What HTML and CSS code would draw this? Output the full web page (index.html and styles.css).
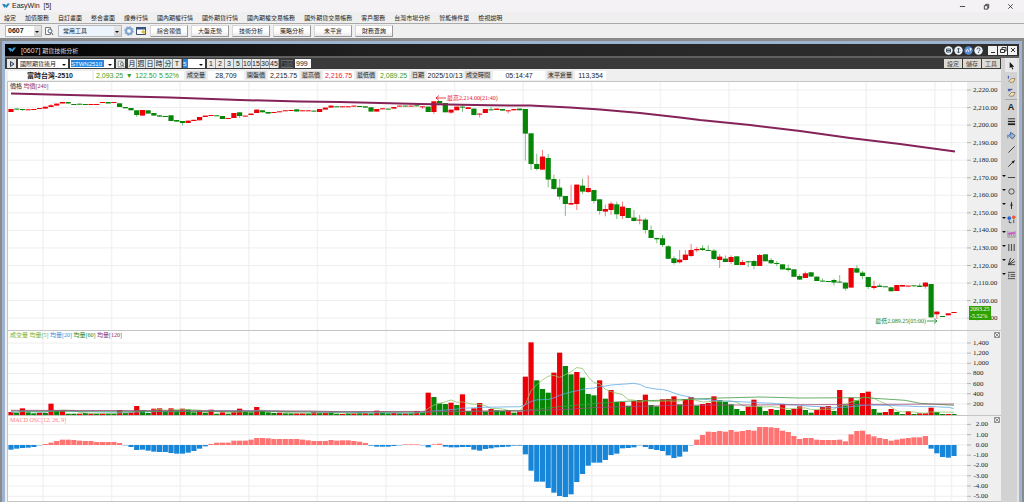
FILE: index.html
```html
<!DOCTYPE html>
<html lang="zh-Hant">
<head>
    <meta charset="UTF-8">
    <meta name="viewport" content="width=device-width, initial-scale=1.0">
    <title>EasyWin [5]</title>
    <link rel="stylesheet" href="styles.css">
</head>
<body>
    <header class="title-bar">
        <svg class="logo" viewBox="0 0 8 6"><path d="M0 1h3l1 1.500L5.500 .5H8L4.500 5 3.500 3.500 2.500 5z" fill="#2787b8"/></svg>
        <span class="app-name">EasyWin&nbsp; [5]</span>
        <div class="win-btns">
            <button aria-label="minimize"><svg viewBox="0 0 8 8"><path d="M1 4h6" stroke="#333" fill="none"/></svg></button>
            <button aria-label="restore"><svg viewBox="0 0 8 8"><path d="M1.500 3h4v4h-4zM3 2.500V1.500h3.500v4h-1" stroke="#333" fill="none"/></svg></button>
            <button aria-label="close"><svg viewBox="0 0 8 8"><path d="M1.500 1.500l5 5m0-5l-5 5" stroke="#333" fill="none"/></svg></button>
        </div>
    </header>

    <nav class="menu">
        <a href="#">設定</a>
        <a href="#">加值服務</a>
        <a href="#">自訂畫面</a>
        <a href="#">整合畫面</a>
        <a href="#">證券行情</a>
        <a href="#">國內期權行情</a>
        <a href="#">國外期貨行情</a>
        <a href="#">國內期權交易帳務</a>
        <a href="#">國外期貨交易帳務</a>
        <a href="#">客戶服務</a>
        <a href="#">台灣市場分析</a>
        <a href="#">智能條件單</a>
        <a href="#">檢視說明</a>
    </nav>

    <div class="toolbar">
        <span class="drop drop-code"><select aria-label="畫面代碼"><option>0607</option></select></span>
        <button class="icon-btn" aria-label="查詢"><svg viewBox="0 0 10 10"><path d="M1.500 1.500h5v7h-5z" fill="#fff" stroke="#777"/><circle cx="6" cy="5" r="2" fill="#dff" stroke="#667"/><path d="M7.500 6.500L9 9" stroke="#555"/></svg></button>
        <span class="drop drop-tools"><select aria-label="工具列"><option>常用工具</option></select></span>
        <button class="icon-btn" aria-label="齒輪"><svg viewBox="0 0 10 10"><circle cx="5" cy="5" r="3" fill="#dcebfa" stroke="#7fa5cc" stroke-width="2"/><circle cx="5" cy="5" r="4.500" fill="none" stroke="#7fa5cc" stroke-dasharray="1.500 2"/><circle cx="5" cy="5" r="1" fill="#fff"/></svg></button>
        <button class="icon-btn" aria-label="視窗"><svg viewBox="0 0 10 10"><path d="M.5 1.500h9v7h-9z" fill="#fff" stroke="#3b4c66"/><path d="M0 1h10v2.500H0z" fill="#35527d"/><path d="M5 6l2-2 3 2-2 2z" fill="#e3bd3c"/></svg></button>
        <div class="quick-btns">
            <button>綜合報價</button>
            <button>大盤走勢</button>
            <button>技術分析</button>
            <button>策略分析</button>
            <button>未平倉</button>
            <button>財務查詢</button>
        </div>
    </div>

    <main class="workspace">
        <section class="window">
            <div class="window-title">
                <svg class="logo" viewBox="0 0 8 6"><path d="M0 1h3l1 1.500L5.500 .5H8L4.500 5 3.500 3.500 2.500 5z" fill="#3c9ccb"/></svg>
                <h1><span class="code">[0607]</span> 期貨技術分析</h1>
                <div class="round-btns">
                    <button aria-label="連線"><svg viewBox="0 0 9 9"><circle cx="4.500" cy="4.500" r="4.200" fill="#eef3f8"/><path d="M2.500 3h4v3h-4zM2 4.500h4" fill="none" stroke="#456"/></svg></button>
                    <button aria-label="資訊"><svg viewBox="0 0 9 9"><circle cx="4.500" cy="4.500" r="4.200" fill="#eef3f8"/><path d="M4.500 2v5M3 3.500L4.500 2 6 3.500M3 5.500L4.500 7 6 5.500" fill="none" stroke="#456"/></svg></button>
                    <button aria-label="放大"><svg viewBox="0 0 9 9"><circle cx="4.500" cy="4.500" r="4.200" fill="#5b8fd6"/><path d="M2 6l1.500-3L5 6M5.500 3H8M6.500 2v3" fill="none" stroke="#dceaff"/></svg></button>
                    <button aria-label="說明"><svg viewBox="0 0 9 9"><circle cx="4.500" cy="4.500" r="4.200" fill="#eef3f8"/><path d="M3 3.500Q3 2 4.500 2T6 3.500 4.500 5.200M4.500 6v1" fill="none" stroke="#456"/></svg></button>
                </div>
                <div class="square-btns">
                    <button aria-label="縮小"><svg viewBox="0 0 8 8"><path d="M2 6.500h4" stroke="#333"/></svg></button>
                    <button aria-label="還原"><svg viewBox="0 0 8 8"><path d="M1.500 3.500h4v3h-4zM3 3V1.500h4V5H6" fill="none" stroke="#333"/></svg></button>
                    <button aria-label="關閉"><svg viewBox="0 0 8 8"><path d="M2 2l4 4m0-4L2 6" stroke="#333"/></svg></button>
                </div>
            </div>

            <div class="window-body">
                <div class="chart-side">
                    <div class="chart-bar">
                        <button class="play" aria-label="展開"><svg viewBox="0 0 8 8"><path d="M2.500 1.500L6 4 2.500 6.500z" fill="#9cc8ef" stroke="#345"/></svg></button>
                        <span class="drop drop-kind"><select aria-label="商品類別"><option>國際期貨連月</option></select></span>
                        <span class="drop drop-symbol"><input type="text" value="STWN2510" aria-label="商品代碼"></span>
                        <button class="find" aria-label="搜尋"><svg viewBox="0 0 10 10"><path d="M1.500 1.500h5v7h-5z" fill="#fff" stroke="#888"/><circle cx="6" cy="5" r="2" fill="#cfe6e0" stroke="#566"/><path d="M7.500 6.500L9 9" stroke="#555"/></svg></button>
                        <div class="periods">
                            <button>月</button><button>週</button><button>日</button><button>時</button><button class="on">分</button><button>T</button>
                        </div>
                        <span class="drop drop-min"><input type="text" value="5" aria-label="分鐘"></span>
                        <div class="periods">
                            <button>1</button><button>2</button><button>3</button><button class="on">5</button><button>10</button><button>15</button><button>30</button><button>45</button>
                        </div>
                        <label class="span-label" for="span">期間</label>
                        <input class="span-input" id="span" type="text" value="999">
                        <div class="bar-actions">
                            <button>設定</button>
                            <button>儲存</button>
                            <button>工具</button>
                        </div>
                    </div>

                    <div class="quote">
                        <span class="val name">富時台灣-2510</span>
                        <span class="val down change"><span>2,093.25</span><span>▼</span><span>122.50</span><span>5.52%</span></span>
                        <span class="key">成交量</span><span class="val">28,709</span>
                        <span class="key">開盤價</span><span class="val tight">2,215.75</span>
                        <span class="key">最高價</span><span class="val tight up">2,216.75</span>
                        <span class="key">最低價</span><span class="val tight down">2,089.25</span>
                        <span class="key">日期</span><span class="val">2025/10/13</span>
                        <span class="key">成交時間</span><span class="val time">05:14:47</span>
                        <span class="key">未平倉量</span><span class="val tight">113,354</span>
                    </div>

                    <div class="pane">
                        <svg class="plot price-h" id="pricePlot" viewBox="8 82 959 248" preserveAspectRatio="none"></svg>
                        <svg class="axis price-h" id="priceAxis"></svg>
                        <p class="legend"><span>價格</span> <span class="purple">均價[240]</span></p>
                        <span class="mark high"><svg class="arrow" viewBox="0 0 11 6"><path d="M11 3H1M4 .5L1 3l3 2.500" fill="none" stroke="#e8101c" stroke-width=".8"/></svg>最高2,214.00(21:40)</span>
                        <span class="mark low">最低2,089.25(05:00)<svg class="arrow" viewBox="0 0 11 6"><path d="M0 3h10M7 .5L10 3 7 5.500" fill="none" stroke="#16861f" stroke-width=".8"/></svg></span>
                        <span class="last-price">2093.25<br>-5.52%</span>
                    </div>
                    <div class="pane">
                        <svg class="plot volume-h" id="volumePlot" viewBox="8 331 959 84" preserveAspectRatio="none"></svg>
                        <svg class="axis volume-h" id="volumeAxis"></svg>
                        <p class="legend"><span class="lime">成交量</span> <span class="lime">均量[5]</span> <span class="blue">均量[20]</span> <span class="green">均量[60]</span> <span class="purple">均量[120]</span></p>
                        <button class="pane-close" aria-label="關閉成交量"><svg viewBox="0 0 6 6"><path d="M.5.5h5v5h-5zM1 1l4 4m0-4L1 5" fill="none" stroke="#777" stroke-width=".8"/></svg></button>
                    </div>
                    <div class="pane last">
                        <svg class="plot macd-h" id="macdPlot" viewBox="8 416 959 85" preserveAspectRatio="none"></svg>
                        <svg class="axis macd-h" id="macdAxis"></svg>
                        <p class="legend"><span class="pink">MACD OSC[12, 26, 9]</span></p>
                        <button class="pane-close" aria-label="關閉MACD"><svg viewBox="0 0 6 6"><path d="M.5.5h5v5h-5zM1 1l4 4m0-4L1 5" fill="none" stroke="#777" stroke-width=".8"/></svg></button>
                    </div>
                </div>

                <aside class="draw-tools">
                    <button class="picked" aria-label="選取"><svg viewBox="0 0 10 10"><path d="M3 1v7l1.700-1.500L6 9.500l1-.5-1.200-2.700H8z" fill="#111"/></svg></button>
                    <button aria-label="清除一個"><svg viewBox="0 0 10 10"><path d="M1.500 1v3" stroke="#2a3ba0"/><path d="M2 7l3-3h4L7 8H3z" fill="#f3e0b8" stroke="#75603c" stroke-width=".7"/></svg></button>
                    <button class="divide" aria-label="清除全部"><svg viewBox="0 0 10 10"><path d="M1 1.500h5M1 3h3" stroke="#2a3ba0"/><path d="M2 8l3-3h4L7 9H3z" fill="#f3e0b8" stroke="#75603c" stroke-width=".7"/></svg></button>
                    <button class="letter" aria-label="文字">A</button>
                    <button aria-label="線寬"><svg viewBox="0 0 10 10"><path d="M1 2h8" stroke="#222"/><path d="M1 5h8" stroke="#222" stroke-width="1.500"/><path d="M1 8h8" stroke="#222" stroke-width="2"/></svg></button>
                    <button aria-label="填色"><svg viewBox="0 0 10 10"><path d="M2 5l3-3 4 3-3 4z" fill="#9fb4cf" stroke="#4a5d77"/><path d="M1 4v4M4 1v4" stroke="#346bc0"/></svg></button>
                    <button aria-label="直線"><svg viewBox="0 0 10 10"><path d="M1.500 8.500l7-7" stroke="#333"/></svg></button>
                    <button aria-label="箭頭"><svg viewBox="0 0 10 10"><path d="M1.500 8.500L7 3" stroke="#222"/><path d="M9 1L5 3l2 2z" fill="#111"/></svg></button>
                    <button class="more" aria-label="水平線"><svg viewBox="0 0 10 10"><path d="M1 5h8" stroke="#333"/></svg></button>
                    <button class="more" aria-label="圓形"><svg viewBox="0 0 10 10"><circle cx="5" cy="5" r="3" fill="none" stroke="#444"/></svg></button>
                    <button class="more" aria-label="標記"><svg viewBox="0 0 10 10"><path d="M5 1v8" stroke="#222"/><path d="M3.500 4h3L5 7z" fill="#222"/></svg></button>
                    <button class="more" aria-label="漲跌"><svg viewBox="0 0 10 10"><circle cx="2.500" cy="3.500" r="2" fill="#2265d8"/><circle cx="7.500" cy="2.500" r="2" fill="#ee5a2e"/><path d="M2.500 6v2.500H5M7.500 5v4" fill="none" stroke="#345"/></svg></button>
                    <button class="more" aria-label="趨勢"><svg viewBox="0 0 10 10"><path d="M1 2v7h8V2M3 3v5M5 3v5M7 3v5" fill="none" stroke="#777" stroke-width=".7"/><path d="M1 5l2 1 2-2 2 1 2-1" fill="none" stroke="#d13ed1" stroke-width="1.300"/></svg></button>
                    <button class="more" aria-label="週期線"><svg viewBox="0 0 10 10"><path d="M2 1v8M5 1v8M8 1v8" stroke="#555" stroke-width="1.300"/></svg></button>
                    <button class="more" aria-label="扇形線"><svg viewBox="0 0 10 10"><path d="M1.500 8.500L4 1M1.500 8.500L8 2M1.500 8.500L9 5M1.500 8.500H9" stroke="#333"/></svg></button>
                    <button class="more" aria-label="黃金分割"><svg viewBox="0 0 10 10"><path d="M1 1.500h8M1 8.500h8M4 4h5M4 6h5M2 3v4" stroke="#444"/></svg></button>
                </aside>
            </div>
        </section>
    </main>

    <script src="chart.js"></script>
</body>
</html>
```

FILE: styles.css
```css
* {
    box-sizing: border-box;
}

body {
    margin: 0;
    min-height: 100vh;
    overflow: hidden;
    background-color: #efefef;
    color: #222;
    font-family: "Liberation Sans", "Noto Sans CJK TC", sans-serif;
    font-size: 6px;
    line-height: 8px;
}

button, input, select {
    margin: 0;
    padding: 0;
    border: none;
    border-radius: 0;
    background: none;
    color: inherit;
    font: inherit;
}

button {
    display: flex;
    align-items: center;
    justify-content: center;
}

a {
    color: inherit;
    text-decoration: none;
    white-space: nowrap;
}

.logo {
    width: 8px;
    height: 6px;
}

/* application frame */
.title-bar {
    display: flex;
    align-items: center;
    gap: 2px;
    height: 12px;
    padding-left: 2px;
    background-color: #f4f2f5;
}

.app-name {
    font-size: 7px;
}

.win-btns {
    display: flex;
    gap: 17px;
    margin-left: auto;
    padding-right: 10px;
}

.win-btns svg {
    width: 7px;
    height: 7px;
}

.menu {
    display: flex;
    align-items: center;
    gap: 9px;
    height: 11px;
    padding-left: 4px;
}

.toolbar {
    display: flex;
    align-items: center;
    height: 16px;
    padding-left: 5px;
    border-top: 1px solid #aaa;
    border-bottom: 1px solid #888;
}

.drop {
    position: relative;
    display: flex;
    border: 1px solid #b5b9bf;
    background-color: #fff;
}

.drop select, .drop input {
    flex: 1;
    min-width: 0;
    appearance: none;
    padding-left: 2px;
}

.drop::after {
    content: "";
    position: absolute;
    top: 50%;
    right: 2px;
    border: 2px solid transparent;
    border-top-color: #111;
    pointer-events: none;
}

.drop-code {
    width: 37px;
    height: 12px;
    font-size: 7px;
    font-weight: bold;
}

.drop-tools {
    width: 64px;
    height: 12px;
    margin-left: 4px;
    background-color: #edf4fc;
}

.drop-tools select {
    padding-left: 4px;
}

.drop-code select, .drop-tools select {
    background: linear-gradient(#e9e9e9, #d2d2d2) right / 7px 100% no-repeat;
}

.icon-btn svg {
    width: 10px;
    height: 10px;
}

.icon-btn {
    margin-left: 2px;
}

.quick-btns {
    display: flex;
    gap: 3px;
    margin-left: 4px;
}

.quick-btns button {
    width: 38px;
    height: 12px;
    background: linear-gradient(#fff 50%, #e8e8ec);
    border: 1px solid #d8d8d8;
    border-right-color: #999;
    border-bottom-color: #999;
}

.workspace {
    padding: 2px 2px 0;
    background-color: #8b8b8b;
}

.window {
    border: 3px solid #9db5d3;
    border-bottom: none;
    background-color: #efefef;
}

.window-title {
    display: flex;
    align-items: center;
    height: 12px;
    padding: 0 2px 0 3px;
    background: linear-gradient(90deg, #000, #202020 35%, #303030);
    color: #ddd;
}

.window-title h1 {
    margin: 2px 0 0 5px;
    font-size: 6px;
    font-weight: normal;
}

.window-title .code {
    font-size: 7px;
}

.round-btns, .square-btns {
    display: flex;
    gap: 1px;
}

.round-btns {
    margin-left: auto;
}

.square-btns {
    margin-left: 5px;
}

.round-btns svg {
    width: 9px;
    height: 9px;
}

.square-btns button {
    width: 9px;
    height: 9px;
    background-color: #f2f2f2;
}

.square-btns svg {
    width: 8px;
    height: 8px;
}

.window-body {
    display: flex;
    border-top: 2px solid #606060;
}

.chart-side {
    flex: 1;
    min-width: 0;
}

/* dark control row */
.chart-bar {
    display: flex;
    align-items: center;
    height: 11px;
    padding: 0 1px 0 2px;
    background-color: #3a3a3a;
}

.play, .find {
    width: 9px;
    height: 9px;
    background-color: #e6e6e6;
}

.play svg, .find svg {
    width: 8px;
    height: 8px;
}

.chart-bar .drop {
    height: 9px;
    border: none;
}

.drop-kind {
    width: 50px;
    margin-left: 2px;
}

.drop-symbol {
    width: 44px;
    margin: 0 2px;
}

.drop-symbol input {
    flex: none;
    width: 33px;
    margin: 1px;
    padding: 0;
    background-color: #2685df;
    color: #fff;
}

.find {
    margin-right: 3px;
}

.periods {
    display: flex;
}

.periods button {
    width: 9px;
    height: 9px;
    border-right: 1px solid #999;
    background-color: #e9e9e9;
    font-size: 7px;
}

.periods .on {
    background-color: #d0ecf2;
}

.drop-min {
    width: 22px;
    margin: 0 2px 0 1px;
}

.drop-min input {
    flex: none;
    width: 5px;
    padding: 0;
    background-color: #2685df;
    color: #fff;
}

.span-label {
    margin: 0 2px;
    background-color: #6a6a6a;
    color: #111;
}

.span-input {
    width: 16px;
    height: 9px;
    padding-left: 1px;
    background-color: #fff;
    font-size: 7px;
}

.bar-actions {
    display: flex;
    gap: 1px;
    margin-left: auto;
}

.bar-actions button {
    width: 18px;
    height: 9px;
    background-color: #dedbd5;
    color: #4c4033;
}

/* quote row */
.quote {
    display: flex;
    align-items: center;
    gap: 2px;
    height: 12px;
    padding-left: 3px;
    font-size: 7px;
    white-space: nowrap;
}

.quote .key {
    padding: 0 1px;
    background-color: #d9d9d9;
    font-size: 6px;
}

.quote .val {
    min-width: 36px;
    height: 9px;
    background-color: #fff;
    line-height: 9px;
    text-align: center;
}

.quote .tight {
    min-width: 31px;
}

.quote .name {
    min-width: 84px;
    font-weight: bold;
}

.quote .change {
    display: flex;
    justify-content: space-between;
    width: 90px;
    padding: 0 5px 0 2px;
}

.quote .time {
    min-width: 52px;
}

.up {
    color: #f02030;
}

.down {
    color: #3ba020;
}

/* chart panes */
.pane {
    position: relative;
    display: flex;
    margin-left: 2px;
    border-top: 1px solid #c4c4c4;
    border-left: 1px solid #c4c4c4;
    font-family: "Liberation Serif", "Noto Sans CJK TC", serif;
}

.pane.last {
    border-bottom: 1px solid #c4c4c4;
}

.plot {
    flex: 1;
    min-width: 0;
    background-color: #fff;
}

.axis {
    width: 34px;
    background-color: #efefef;
    font-size: 7px;
}

.axis text {
    fill: #222;
}

.price-h {
    height: 248px;
}

.volume-h {
    height: 84px;
}

.macd-h {
    height: 85px;
}

.legend {
    position: absolute;
    top: 0;
    left: 2px;
    margin: 0;
}

.purple {
    color: #8a2a66;
}

.lime {
    color: #6fb030;
}

.blue {
    color: #2d8fdc;
}

.green {
    color: #16861f;
}

.pink {
    color: #ff7b7b;
}

.mark {
    position: absolute;
    display: flex;
    align-items: center;
    gap: 1px;
    white-space: nowrap;
}

.mark .arrow {
    width: 11px;
    height: 6px;
}

.mark.high {
    top: 12px;
    left: 43%;
    color: #e8101c;
}

.mark.low {
    right: 63px;
    bottom: 5px;
    color: #16861f;
}

.last-price {
    position: absolute;
    right: 10px;
    bottom: 10px;
    width: 22px;
    padding-left: 1px;
    background-color: #2ea000;
    color: #fff;
    line-height: 7px;
}

.pane-close {
    position: absolute;
    top: 1px;
    right: 1px;
}

.pane-close svg {
    width: 6px;
    height: 6px;
}

/* drawing tools on the right edge */
.draw-tools {
    display: flex;
    flex-direction: column;
    width: 18px;
    padding-left: 4px;
    border-right: 2px solid #e4e4e4;
    background-color: #d2d2d2;
}

.draw-tools button {
    position: relative;
    height: 14px;
}

.draw-tools svg {
    width: 9px;
    height: 9px;
}

.draw-tools .picked {
    background-color: #e8e8e8;
}

.draw-tools .divide {
    border-bottom: 1px solid #aaa;
}

.draw-tools .letter {
    font-size: 9px;
    font-weight: bold;
}

.draw-tools .more::before {
    content: "";
    position: absolute;
    top: 5px;
    left: -3px;
    border: 2px solid transparent;
    border-top-color: #111;
}
```

FILE: chart.js
```js
// colour, body top, body bottom, wick top, wick bottom
const candles = `r 109 112,g 108.6 109.6,g 109 110 109 111,r 109.3 110,r 109 110,r 108 109,r 106.7 108.6,r 105.3 107 104 107,r 103.6 105.6,r 102 103.5,
g 102 103.5,g 104 105,g 103.7 104.7,g 104 105,r 104 105,r 104 105,r 102 103,g 102 103.5,r 102 103,g 103.3 107,
g 107 108.3,g 108 110.3,g 110.3 115 110.3 117,r 110 115.6,g 110.3 113.6,g 113 115.6,g 115.3 116.6,g 116 116.6,g 115.3 121,g 120 121.6,
g 121 123 121 125.5,r 120.6 123,r 119.8 121,r 117 120.3,r 115.6 117,r 115 116,g 115.3 116,g 116 119,r 118 118.6,r 113 118,
g 112.3 116 112.3 118,r 115.6 116.6,r 113.6 115,r 109.6 113,g 110.3 112.3,g 112 113.6,r 112 113,r 111.3 112,r 110.3 111,r 110 110.8,
g 109.3 111.5,r 110.3 111,r 110.3 111,g 110.6 111.6,r 109 112,r 107.6 109.6,r 105.6 107.6,g 106.3 107,r 106.3 107,r 106.3 107,
r 105.6 106.6,g 106 107,g 106.3 107.6,g 107.3 111.6,r 109 111.6,r 108.3 109.3,g 108.6 109.3,r 107 108.6,r 105.6 106.6,g 105.6 106.3,
r 105.6 106.3,g 105.3 106.3,r 106.3 107 106.3 109,g 106.6 112,r 101.3 112 101 114,g 101 103.6,g 103 112.3,r 109.6 112.6 109.6 114,r 106.6 110.3,g 106.6 107.6 105 112,
r 107.3 109,g 108.6 115,r 113.6 114.6 113 117.5,r 109 113,g 109.3 110.3 107 110.3,r 108.6 110,g 109 110.6,r 110.3 111.3 110.3 113.5,r 109 110.3,g 108.6 110.3,
g 109 133.6 109 160.6,g 133.3 164 133.3 170,g 164 169 153.6 170.5,r 156.6 169.6 150 170,g 158 179.6 154 187.3,g 179 189 174.6 190,g 187.6 196.6 179 199.6,g 196 204 196 216,r 203 204.6 184.6 204.6,r 184.6 204 184.6 210,
g 185.6 191.6 178.6 194,r 188 192 175.3 193,g 190 201 190 203.6,g 199.3 211 199.3 214.6,r 209 211.6 204.6 216.3,r 203.6 210 201.6 214.6,g 204.3 214.3 201.6 219,r 206.6 216 201.6 219,g 208 218,g 217.6 221 210 221.5,
r 219.6 220.3 215 224.3,g 219.6 230 218 233.6,g 230 238 225.6 238,g 238 239.3 237.5 243.3,g 238.3 245 235 247,g 246.3 258.8 245 259,g 258.3 263 256.3 264.6,r 259.6 262.3 250 263.5,r 254.6 260 250 260.5,r 250 256 244 257,
r 249 250.3 247 252.3,g 248.3 250 245.3 251,g 250 251 245.3 251,g 250.6 259 249 260.3,r 256.6 260 254 268,g 258.6 262 255.3 262,r 257 262 255.3 264,g 256.3 265,r 262 265 260 265,g 261.3 262.3 261 267,
g 261 266 260 269.3,r 255 266 254 266,g 254.3 261.3,g 260 263.3 258 264,g 263 264 261 266,g 264.3 269.4,g 268.3 270 264.6 271.6,g 269.3 276.8,g 276 279.6 274 280,r 273.3 278 271.6 278,
g 272.3 276.6,g 276.6 281,g 280.6 281.6 278.5 281.6,g 281 282,g 280 282.6 278.6 285.6,g 281.6 282.6 275 282.6,g 282.6 288.6 282.6 290.6,r 268 287.6,g 268.3 272.6 265.3 273,g 272.6 276 271 279.3,
g 277 287 277 289,r 286 288 280.6 289.6,g 285.6 287 283.6 287,g 286.3 287,g 287.3 291.3,r 285 291,r 285 286.6,r 285.6 286.6,g 285.3 286.3,g 285.6 287 283.6 287,
r 282.6 286.6 282 288.6,g 284 317.3 284 318,r 311.6 314.3 311.6 319,g 316 316.6,r 313.3 315.3,r 312 313`.split(",");

// bar tops, three steps to a pixel
const volumes = `r261 g264 r250 g262 g265 r263 g264 r236 g256 r257 g266 g266 r266 g264 r266 g266 r266 g266 g266 r255
g264 r262 r243 g256 g264 r251 r250 g258 r250 g256 r251 g253 g262 r256 g263 r254 g266 r262 g266 r260
r251 g261 g262 r246 g258 g262 g264 r263 g265 g265 r265 r265 g265 r261 g263 r263 g261 g266 r267 g265
r265 g262 r264 g265 r257 g262 g265 r264 g265 r265 g264 r258 g262 r203 g216 g235 g237 r233 g240 r208
g258 r250 r234 g260 r252 g256 g258 r255 g263 r260 r155 r52 g166 g192 g203 r143 r83 g123 g148 r141
g158 g207 g211 r166 g221 r195 g231 r231 g242 r228 r225 r209 g240 g244 r223 r222 r214 g238 r222 r216
g242 r237 r234 r214 g225 g231 g238 g252 g258 r245 r224 g245 g258 r252 g255 r238 g255 r252 r244 g255
g263 r255 r246 r243 g258 r195 g241 r218 g226 r204 r200 g252 g263 r261 r252 g261 g267 r258 g267 r265
r265 r248 g261 g267 r267 g267`.split(/\s+/);

const macd = [
    374, 371, 369, 368, 366, 361, 357, 353, 348, 344, 344, 345, 347, 348, 348, 351, 351, 351, 351, 354,
    361, 366, 375, 374, 377, 380, 381, 381, 384, 386, 386, 383, 378, 371, 364, 357, 353, 353, 353, 347,
    347, 347, 344, 339, 339, 340, 342, 342, 342, 342, 342, 344, 346, 348, 348, 348, 345, 347, 346, 346,
    348, 350, 354, 362, 365, 365, 365, 363, 361, 358, 358, 358, 361, 367, 358, 356, 365, 367, 367, 366,
    366, 374, 377, 372, 370, 367, 366, 365, 362, 362, 388, 437, 470, 470, 489, 503, 513, 516, 508, 471,
    447, 422, 413, 413, 405, 390, 386, 370, 369, 367, 361, 366, 372, 375, 378, 391, 399, 395, 380, 361,
    344, 330, 320, 321, 318, 320, 315, 320, 318, 315, 317, 306, 306, 307, 309, 317, 321, 333, 342, 339,
    339, 344, 345, 345, 345, 344, 349, 328, 318, 317, 328, 334, 339, 342, 347, 344, 341, 339, 337, 337,
    333, 371, 385, 396, 398, 393
];

const colors = { r: "#ec0008", g: "#078507" };
const barX = i => 11 + 5.715 * i;
const stepY = v => 325 + v / 3;

function rect(x, y, w, h, fill, opacity) {
    return `<rect x="${x}" y="${y}" width="${w}" height="${h}" fill="${fill}" opacity="${opacity || 1}"/>`;
}

function line(points, color, width) {
    return `<polyline points="${points}" fill="none" stroke="${color}" stroke-width="${width}"/>`;
}

function grid(top, bottom, ys) {
    let out = "";
    for (let i = 0; i < 14; i++) {
        out += line(`${43 + 68.6 * i},${top} ${43 + 68.6 * i},${bottom}`, "#f3f3f3", 1.5);
    }
    out += line(`951.5,${top} 951.5,${bottom}`, "#f3f3f3", 1.5);
    ys.forEach(y => out += line(`8,${y} 967,${y}`, "#eeeeee", 1));
    return out;
}

// labels with their tick marks, y counted from the top of the pane
function drawAxis(id, rows, top, alignRight) {
    document.getElementById(id).innerHTML = rows.map(([y, label]) =>
        line(`0,${y - top} 4,${y - top}`, "#b5b5b5", 1) +
        `<text x="${alignRight ? 21 : 6}" y="${y - top + 2}" text-anchor="${alignRight ? "end" : "start"}">${label}</text>`
    ).join("");
}

function average(size) {
    const tops = volumes.map(v => Number(v.slice(1)));
    return tops.map((v, i) => {
        const part = tops.slice(Math.max(0, i - size + 1), i + 1);
        return `${barX(i)},${stepY(part.reduce((a, b) => a + b) / part.length)}`;
    }).join(" ");
}

// price
const priceRows = [];
for (let i = 0; i < 14; i++) {
    priceRows.push([90 + 17.55 * i, (2220 - i * 10).toLocaleString("en-US") + ".00"]);
}
let price = grid(82, 330, priceRows.map(r => r[0]));
candles.forEach((candle, i) => {
    const [c, ...n] = candle.trim().split(" ");
    const [top, bottom, high = top, low = bottom] = n.map(Number);
    price += rect(barX(i) - 0.5, high, 1, low - high, colors[c], 0.5);
    price += rect(barX(i) - 2.6, top, 5.2, Math.max(bottom - top, 1), colors[c]);
});
price += line("11,93.500 60,94.800 170,97.500 240,100 300,101.500 340,102 420,104 490,105.300 530,105.500 570,107.600 600,109.500 640,113 680,117.500 700,120 750,125 800,131 850,138 900,144 955,151.500", "#852258", 2);
document.getElementById("pricePlot").innerHTML = price;
drawAxis("priceAxis", priceRows, 82);

// volume
const volumeRows = [];
for (let i = 0; i < 7; i++) {
    volumeRows.push([343 + 10.15 * i, (1400 - i * 200).toLocaleString("en-US")]);
}
let volume = grid(331, 415, volumeRows.map(r => r[0]));
volumes.forEach((v, i) => {
    const y = stepY(Number(v.slice(1)));
    volume += rect(barX(i) - 2.6, y, 5.2, 415 - y, colors[v[0]]);
});
volume += line(average(5), "#8fc465", 0.8);
volume += line(average(20), "#62aae4", 0.8);
volume += line("11,411 200,411.500 430,412 523,410.600 560,406.600 595,403.600 625,401.300 680,399.700 720,398 760,397 800,398 865,397.700 885,399 905,400.300 920,403.300 954,405.300", "#409a40", 0.8);
volume += line("11,410.300 310,411 340,411.700 523,411 560,409.700 600,407.300 680,405.300 740,405 954,404", "#9b4d7d", 0.8);
document.getElementById("volumePlot").innerHTML = volume;
drawAxis("volumeAxis", volumeRows, 331);

// macd
const macdRows = [];
for (let i = 0; i < 8; i++) {
    macdRows.push([424.4 + 10.27 * i, (2 - i).toFixed(2)]);
}
let bars = grid(416, 501, macdRows.map(r => r[0]));
macd.forEach((v, i) => {
    const y = stepY(v);
    bars += rect(barX(i) - 2.6, Math.min(y, 445), 5.2, Math.abs(y - 445), y < 445 ? "#ff7373" : "#1786d9");
});
document.getElementById("macdPlot").innerHTML = bars;
drawAxis("macdAxis", macdRows, 416, true);
```
